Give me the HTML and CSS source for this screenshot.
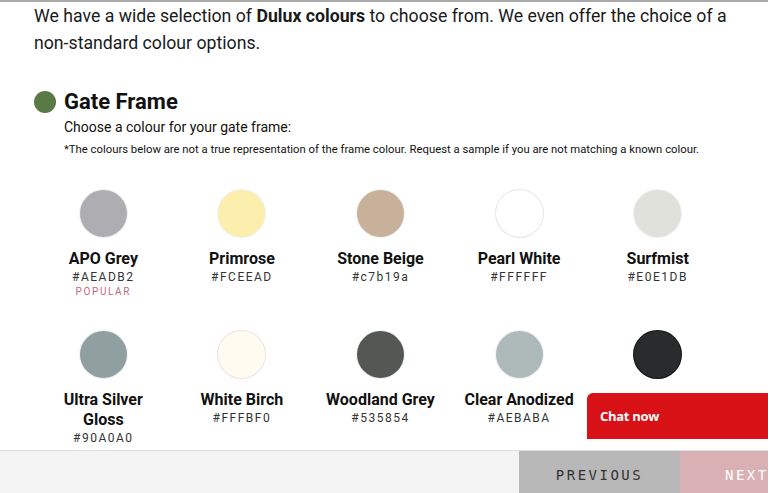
FILE: index.html
```html
<!DOCTYPE html>
<html lang="en">
<head>
<meta charset="utf-8">
<title>Gate Frame colours</title>
<link rel="stylesheet" href="styles.css">
</head>
<body>
<div class="page">
  <main class="content">
    <p class="intro"><span>We have a wide selection of </span><strong>Dulux colours</strong><span> to choose from. We even offer the choice of a</span> <span>non-standard colour options.</span></p>

    <section class="step">
      <h2 class="step-title"><span class="step-dot"></span>Gate Frame</h2>
      <p class="step-sub">Choose a colour for your gate frame:</p>
      <p class="step-note">*The colours below are not a true representation of the frame colour. Request a sample if you are not matching a known colour.</p>

      <div class="swatches">
        <div class="swatch"><span class="chip" style="background:#AEADB2"></span><span class="name">APO Grey</span><span class="hex">#AEADB2</span><span class="tag">POPULAR</span></div>
        <div class="swatch"><span class="chip" style="background:#FCEEAD"></span><span class="name">Primrose</span><span class="hex">#FCEEAD</span></div>
        <div class="swatch"><span class="chip" style="background:#c7b19a"></span><span class="name">Stone Beige</span><span class="hex">#c7b19a</span></div>
        <div class="swatch"><span class="chip chip-light" style="background:#FFFFFF"></span><span class="name">Pearl White</span><span class="hex">#FFFFFF</span></div>
        <div class="swatch"><span class="chip" style="background:#E0E1DB"></span><span class="name">Surfmist</span><span class="hex">#E0E1DB</span></div>
        <div class="swatch"><span class="chip" style="background:#90A0A0"></span><span class="name">Ultra Silver<br>Gloss</span><span class="hex">#90A0A0</span></div>
        <div class="swatch"><span class="chip chip-light" style="background:#FFFBF0"></span><span class="name">White Birch</span><span class="hex">#FFFBF0</span></div>
        <div class="swatch"><span class="chip" style="background:#535854"></span><span class="name">Woodland Grey</span><span class="hex">#535854</span></div>
        <div class="swatch"><span class="chip" style="background:#AEBABA"></span><span class="name">Clear Anodized</span><span class="hex">#AEBABA</span></div>
        <div class="swatch"><span class="chip chip-dark" style="background:#292c2d"></span></div>
      </div>
    </section>
  </main>

  <div class="chat">Chat now</div>

  <footer class="footer">
    <button class="btn btn-prev">PREVIOUS</button>
    <button class="btn btn-next">NEXT</button>
  </footer>
</div>
</body>
</html>
```

FILE: styles.css
```css
* { box-sizing: border-box; }
html, body { margin: 0; padding: 0; }
body {
  width: 768px;
  height: 493px;
  overflow: hidden;
  background: #fff;
  color: #111;
  font-family: Roboto, "Liberation Sans", sans-serif;
}
.page {
  position: relative;
  height: 493px;
  border-top: 2px solid #a9a9a9;
  display: flex;
  flex-direction: column;
}
.content {
  flex: 1;
  padding: 0 0 0 34px;
  overflow: hidden;
}
.intro {
  margin: 0;
  padding-top: 1px;
  font-size: 17.7px;
  line-height: 27px;
  color: #1a1a1a;
  width: 700px;
}
.intro strong { font-weight: 700; }
.step { margin-top: 32px; }
.step-title {
  margin: 0;
  display: flex;
  align-items: center;
  gap: 8px;
  font-size: 22px;
  line-height: 26px;
  font-weight: 700;
}
.step-dot {
  width: 22px;
  height: 22px;
  border-radius: 50%;
  background: #5a7a45;
  flex: none;
}
.step-sub {
  margin: 2px 0 0 30px;
  font-size: 14px;
  line-height: 20px;
}
.step-note {
  margin: 6px 0 0 30px;
  font-size: 11.3px;
  line-height: 14px;
}
.swatches {
  display: grid;
  grid-template-columns: repeat(5, 138.6px);
  row-gap: 32px;
  margin-top: 33px;
}
.swatch {
  display: flex;
  flex-direction: column;
  align-items: center;
  text-align: center;
}
.chip {
  width: 47px;
  height: 47px;
  border-radius: 50%;
  box-shadow: 0 0 0 1px rgba(0,0,0,0.06);
}
.chip-light { box-shadow: 0 0 0 1px #e6e6e6; }
.chip-dark { box-shadow: 0 0 0 1px #111; }
.name {
  margin-top: 12px;
  font-size: 16px;
  line-height: 20px;
  font-weight: 700;
}
.hex {
  font-size: 12px;
  line-height: 16px;
  letter-spacing: 1.5px;
  color: #333;
}
.tag {
  font-size: 10px;
  line-height: 14px;
  letter-spacing: 1.6px;
  color: #c06a80;
}
.chat {
  position: absolute;
  left: 587px;
  top: 391px;
  width: 190px;
  height: 46px;
  background: #d71116;
  border-radius: 6px 0 0 0;
  color: #fff;
  font-family: "Open Sans", sans-serif;
  font-weight: 700;
  font-size: 13px;
  line-height: 46px;
  padding-left: 13px;
  letter-spacing: -0.3px;
}
.footer {
  height: 43px;
  flex: none;
  background: #f3f3f3;
  border-top: 1px solid #dedede;
  display: flex;
  justify-content: flex-end;
}
.btn {
  border: 0;
  margin: 0;
  height: 100%;
  padding-top: 6px;
  font-family: "DejaVu Sans Mono", "Liberation Mono", monospace;
  font-size: 14px;
  letter-spacing: 2.5px;
}
.btn-prev {
  width: 161px;
  background: #b8b8b8;
  color: #333;
}
.btn-next {
  width: 88px;
  background: #d9b0b4;
  color: #fff;
  text-align: left;
  padding-left: 45px;
}
```
